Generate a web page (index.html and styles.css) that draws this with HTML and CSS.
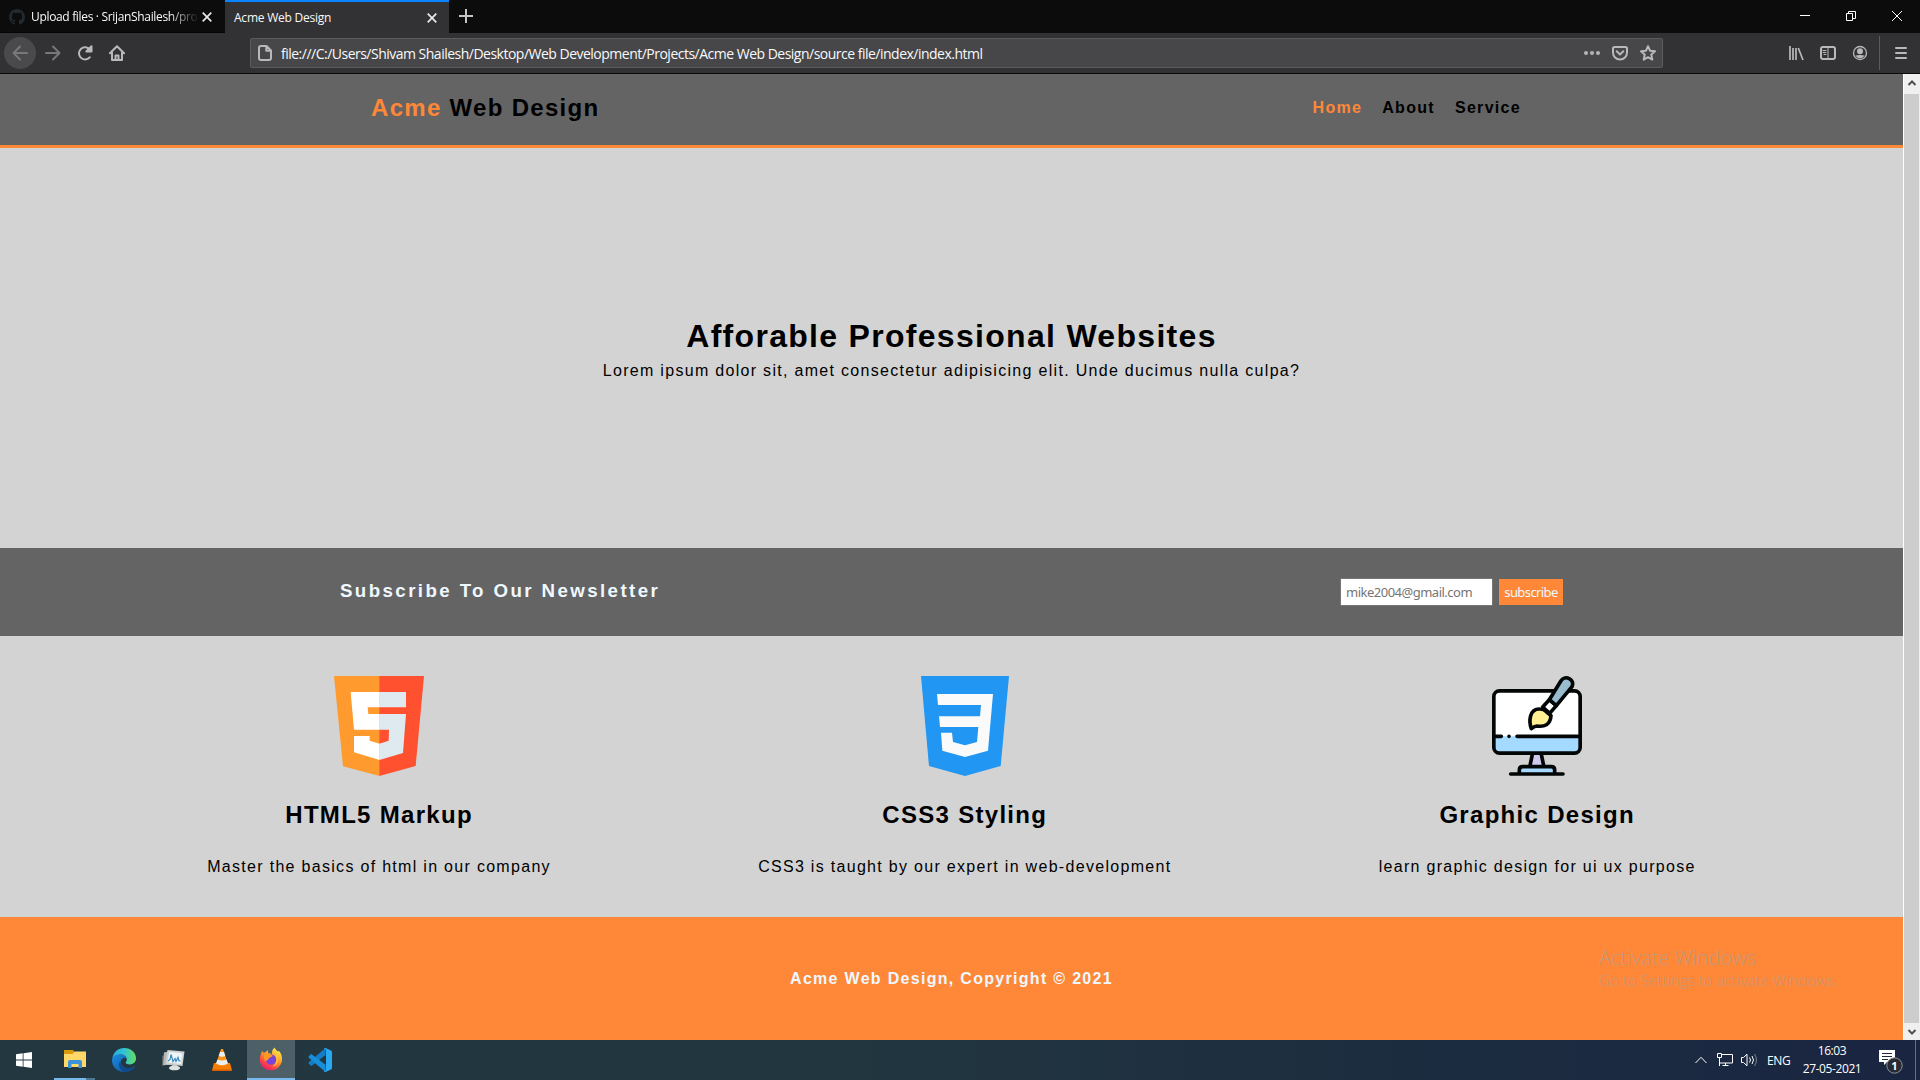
FILE: index.html
```html
<!DOCTYPE html>
<html lang="en">
<head>
<meta charset="utf-8">
<title>Acme Web Design</title>
<link rel="stylesheet" href="styles.css">
</head>
<body>
<div class="browser">
  <div class="tabs">
    <div class="tab tab-idle">
      <svg class="github" viewBox="0 0 16 16" width="16" height="16"><path fill="#24292e" d="M8 0C3.58 0 0 3.58 0 8c0 3.54 2.29 6.53 5.47 7.59.4.07.55-.17.55-.38 0-.19-.01-.82-.01-1.49-2.01.37-2.53-.49-2.69-.94-.09-.23-.48-.94-.82-1.13-.28-.15-.68-.52-.01-.53.63-.01 1.08.58 1.23.82.72 1.21 1.87.87 2.33.66.07-.52.28-.87.51-1.07-1.78-.2-3.64-.89-3.64-3.95 0-.87.31-1.59.82-2.15-.08-.2-.36-1.02.08-2.12 0 0 .67-.21 2.2.82a7.6 7.6 0 0 1 4 0c1.53-1.04 2.2-.82 2.2-.82.44 1.1.16 1.92.08 2.12.51.56.82 1.27.82 2.15 0 3.07-1.87 3.75-3.65 3.95.29.25.54.73.54 1.48 0 1.07-.01 1.93-.01 2.2 0 .21.15.46.55.38A8 8 0 0 0 16 8c0-4.42-3.58-8-8-8z"/></svg>
      <span class="tab-title idle-title">Upload files · SrijanShailesh/pro</span>
      <svg class="tab-close" viewBox="0 0 10 10" width="10" height="10"><path d="M.7.7l8.6 8.6M9.3.7L.7 9.3"/></svg>
    </div>
    <div class="tab tab-active">
      <span class="tab-title active-title">Acme Web Design</span>
      <svg class="tab-close" viewBox="0 0 10 10" width="10" height="10"><path d="M.7.7l8.6 8.6M9.3.7L.7 9.3"/></svg>
    </div>
    <svg class="tab-add" viewBox="0 0 14 14" width="14" height="14"><path d="M7 0v14M0 7h14"/></svg>
    <div class="window-buttons">
      <svg viewBox="0 0 10 10" width="10" height="10"><path d="M0 4.5h10"/></svg>
      <svg viewBox="0 0 10 10" width="10" height="10"><path d="M.5 2.5h6v7h-6zM2.5 2.5v-2h7v7h-3"/></svg>
      <svg viewBox="0 0 10 10" width="10" height="10"><path d="M0 0l10 10M10 0L0 10"/></svg>
    </div>
  </div>
  <div class="toolbar">
    <div class="nav-buttons">
      <span class="back"><svg class="line dim" viewBox="0 0 16 16" width="16" height="16"><path d="M15 8H1.5M8 1.5L1.5 8 8 14.5"/></svg></span>
      <svg class="line dim" viewBox="0 0 16 16" width="16" height="16"><path d="M1 8h13.5M8 1.5L14.500 8 8 14.5"/></svg>
      <svg class="line" viewBox="0 0 16 16" width="16" height="16"><path d="M12.700 12.300A6.100 6.100 0 1 1 13 4.700M14.500 1.300V6.500H9.300z"/></svg>
      <svg class="line" viewBox="0 0 16 16" width="16" height="16"><path d="M.9 8.300L8 1.300l7.100 7M3 7.500V15h10V7.500"/><path d="M6.500 15v-4.500h3V15"/></svg>
    </div>
    <div class="url">
      <svg class="line" viewBox="0 0 16 16" width="16" height="16"><path d="M4 1h5.500L14 5.500V13a2 2 0 0 1-2 2H4a2 2 0 0 1-2-2V3a2 2 0 0 1 2-2zM9.300 1v4.700H14"/></svg>
      <span class="url-text">file:///C:/Users/Shivam Shailesh/Desktop/Web Development/Projects/Acme Web Design/source file/index/index.html</span>
      <div class="url-actions">
        <svg viewBox="0 0 16 16" width="16" height="16" fill="#b5b5b6"><circle cx="2" cy="8" r="2"/><circle cx="8" cy="8" r="2"/><circle cx="14" cy="8" r="2"/></svg>
        <svg class="line" viewBox="0 0 16 16" width="16" height="16"><path d="M2.500 2h11a1.500 1.500 0 0 1 1.500 1.500V7.500a7 7 0 0 1-14 0V3.500A1.500 1.500 0 0 1 2.500 2zM4.700 6.300L8 9.500l3.300-3.200"/></svg>
        <svg class="line" viewBox="0 0 16 16" width="16" height="16"><path d="M8 1.200l2 4.500 5 .6-3.700 3.300 1 5L8 12.200l-4.300 2.400 1-5L1 6.300l5-.6z"/></svg>
      </div>
    </div>
    <div class="tools">
      <svg class="line books" viewBox="0 0 16 16" width="16" height="16"><path d="M2 1v14M5 3v12M8 3v12M10.300 3l4.700 12"/></svg>
      <svg class="line" viewBox="0 0 16 16" width="16" height="16"><rect x="1" y="2" width="14" height="12" rx="2"/><path class="thin" d="M8 2v12M3 5.500h3M3 7.500h3M4 9.500h2"/></svg>
      <svg class="line" viewBox="0 0 16 16" width="16" height="16"><circle cx="8" cy="8" r="6.500" stroke-width="1.300"/><circle class="solid" cx="8" cy="6.200" r="3"/><path class="solid" d="M3.500 10.300c2 .4 2.500-.3 4.500-.3s2.500.7 4.500.3c-.7 1.800-2.500 3-4.500 3s-3.800-1.200-4.500-3z"/></svg>
      <span class="separator"></span>
      <svg class="line" viewBox="0 0 16 16" width="16" height="16"><path d="M3 3h10M3 8h10M3 13h10"/></svg>
    </div>
  </div>
  <div class="viewport">
    <div class="page">
      <header class="header">
        <h1 class="logo"><span class="accent">Acme</span> Web Design</h1>
        <nav class="menu"><a class="accent">Home</a><a>About</a><a>Service</a></nav>
      </header>
      <section class="hero">
        <h1>Afforable Professional Websites</h1>
        <p>Lorem ipsum dolor sit, amet consectetur adipisicing elit. Unde ducimus nulla culpa?</p>
      </section>
      <section class="newsletter">
        <h3>Subscribe To Our Newsletter</h3>
        <form class="form">
          <input class="email" type="email" placeholder="mike2004@gmail.com">
          <button class="submit" type="button">subscribe</button>
        </form>
      </section>
      <section class="features">
        <article class="feature">
          <svg viewBox="462 48 270 300" width="90" height="100"><path fill="#ff9a2e" d="M462 48h137v300l-110-29z"/><path fill="#ff512f" d="M598 48h134l-25 270-109 30z"/><path fill="#fff" d="M512 96h87v46h-36l2 20h34v47h-77zM522 228h47v14l30 9v49l-77-23z"/><path fill="#deeaf0" d="M598 96h80v46h-80zM598 162h80l-9 117-71 21v-49l28-9 1-33h-29z"/></svg>
          <h2>HTML5 Markup</h2>
          <p>Master the basics of html in our company</p>
        </article>
        <article class="feature">
          <svg viewBox="540 48 270 300" width="90" height="100"><path fill="#2196f3" d="M543 48h264l-25 270-107 30-108-30z"/><path fill="#fafafa" d="M591 102h168l-15 170-69 19-68-19-4-54h33l3 28 36 10 36-10 4-45H600l-3-32h123l3-34H594z"/></svg>
          <h2>CSS3 Styling</h2>
          <p>CSS3 is taught by our expert in web-development</p>
        </article>
        <article class="feature">
          <svg viewBox="396 48 270 300" width="90" height="100"><rect x="402" y="93" width="258" height="186" rx="17" fill="#fff"/><path fill="#a4daff" d="M402 229h258v35q0 15-15 15H417q-15 0-15-15zM478 337v-7q0-10 10-10h86q10 0 10 10v7z"/><path fill="#cdc9ef" d="M518 281h26l7 38h-41z"/><g fill="none" stroke="#030606" stroke-width="11" stroke-linecap="round" stroke-linejoin="round"><rect x="401.500" y="92.500" width="259" height="187" rx="17"/><path d="M404 229h20M447 229h.1M471 229h187M517 283l-7 34M544 283l7 34M478 337v-7q0-10 10-10h86q10 0 10 10v7M452 342h157"/><path fill="#fff" d="M548 141l20-22 21 18-20 23z"/><path fill="#99bccf" d="M568 119l35-57c12-18 43-5 33 18l-47 57z"/><path fill="#fff094" d="M514 206c-8-22-6-61 26-59 9 0 14 3 20 9l13 11c-2 28-20 34-42 31-8 0-12 4-17 8z"/></g></svg>
          <h2>Graphic Design</h2>
          <p>learn graphic design for ui ux purpose</p>
        </article>
      </section>
      <footer class="footer">Acme Web Design, Copyright © 2021</footer>
      <div class="watermark"><div class="wm-title">Activate Windows</div><div class="wm-text">Go to Settings to activate Windows.</div></div>
    </div>
    <div class="scrollbar">
      <svg viewBox="0 0 16 20" width="16" height="20"><path d="M4.500 11L8 7.500l3.500 3.500"/></svg>
      <div class="thumb"></div>
      <svg viewBox="0 0 16 17" width="16" height="17"><path d="M4.500 7L8 10.500 11.500 7"/></svg>
    </div>
  </div>
</div>
<div class="taskbar">
  <div class="apps">
    <span class="app"><svg viewBox="0 0 16 16" width="16" height="16" fill="#fff"><path d="M0 2.300L6.700 1.300v6.300H0zM7.500 1.200L16 0v7.600H7.500zM0 8.400h6.700v6.300L0 13.700zM7.500 8.400H16V16l-8.500-1.200z"/></svg></span>
    <span class="app open"><svg viewBox="0 0 22 18" width="22" height="18"><path fill="#d99a0b" d="M0 0h9l1.500 2-1 2H0z"/><path fill="#ffd869" d="M0 4h8.500l2-2.500H22V17H0z"/><path fill="#3b93da" d="M4 18v-6q0-2 2-2h10q2 0 2 2v6h-3.500v-4h-7v4z"/></svg></span>
    <span class="app"><svg viewBox="0 0 24 24" width="24" height="24"><defs><linearGradient id="edgeTop" x1="0" y1=".5" x2="1" y2=".5"><stop offset="0" stop-color="#2aa7e4"/><stop offset=".5" stop-color="#32c3d3"/><stop offset="1" stop-color="#64e05b"/></linearGradient><linearGradient id="edgeLow" x1="0" y1="0" x2="1" y2="1"><stop offset="0" stop-color="#1b8de0"/><stop offset="1" stop-color="#0f4f9d"/></linearGradient></defs><path fill="url(#edgeTop)" d="M.3 10.500C1.300 4 6.200 0 12.200 0 19 0 24 4.800 24 10.300c0 4-3 6.200-6.200 6.200-2.800 0-4.200-.9-4.200-1.900 0-.8 1.200-1.300 1.200-3.200 0-2.400-2.300-5-6.100-5C5 6.400 1.800 8.200.3 10.500z"/><path fill="url(#edgeLow)" d="M0 12.500C0 8.600 3.700 6.400 8.500 6.400c3.700 0 6.200 2.200 6.300 4.700-1-1.200-2-1.500-3-1.300-3.500 1.500-3.700 5.800-1 8.500 2.800 2.700 6.800 2.800 11.200.2.500-.3.900.2.600.6C20.500 22.200 16.500 24 12.500 24 5 24 0 18.600 0 12.500z"/><path fill="#114a8b" d="M8.800 12c-1 3.500.7 6.700 4.500 7.700 3 .8 6 .1 8.700-1.200.5-.2.800.3.500.7C20 22.500 15.700 24.500 11.500 23.900 6.500 21.500 6 15 8.800 12z"/></svg></span>
    <span class="app"><svg viewBox="0 0 24 24" width="24" height="24"><path fill="#5a5f62" d="M1 8l4-2 1 11-5 1z"/><path fill="#b4b7b7" d="M3 4.500l6-1.500 2 14-9 0z"/><path fill="#d0d2d1" d="M6.500 2l17 1.500-2 14.500-17-2z"/><path fill="#eef6f8" d="M8.300 4l13 1.200L20 16 6.500 14.300z"/><path fill="none" stroke="#3589be" stroke-width="1.200" d="M7 13l2-1.500 1-5 2 7 2-3 1 3 2-4 1 3.500h1.500"/><path fill="#c3c6c6" d="M11 17h5l1 2h-7z"/><ellipse cx="13.500" cy="20" rx="5.500" ry="2.300" fill="#dfe1e0"/></svg></span>
    <span class="app"><svg viewBox="0 0 24 24" width="24" height="24"><path fill="#f57d00" d="M4 15h16l2 7.500H2z"/><path fill="#d75e00" d="M2 21.500h20V23H2z"/><path fill="#ff941d" d="M11 1h2l5 15q-6 4-12 0z"/><path fill="#e9eef1" d="M10 4h4l1.300 4q-3.300 1.500-6.600 0zM7.500 11.500q4.500 2 9 0l1.500 4q-6 3.500-12 0z"/></svg></span>
    <span class="app current"><svg viewBox="0 0 24 24" width="24" height="24"><defs><linearGradient id="fox" x1=".8" y1="0" x2=".2" y2="1"><stop offset="0" stop-color="#fff44f"/><stop offset=".45" stop-color="#ff9828"/><stop offset=".75" stop-color="#ff3f48"/><stop offset="1" stop-color="#e01778"/></linearGradient></defs><path fill="url(#fox)" d="M2 7l1-3 2 2q1-1 2-1.300L9 3v3l4 1q-.5-4 2.500-6.500 1 2.500 3.500 4l1-.5c4 4.500 4 11 .5 15A11 11 0 0 1 1 14.500C.5 12 1 9 2 7z"/><circle cx="12" cy="12.500" r="5.200" fill="#7942da"/><path fill="#ff9a1f" d="M5 9q2-3 6-2l3 2-4 2q-1 3-4.500 3z"/><path fill="#ffc42d" d="M15 6q5 3 4 8-1 5-6 6 8-5 2-14z"/></svg></span>
    <span class="app"><svg viewBox="0 0 24 24" width="24" height="24"><path fill="#137dc5" d="M17.500 0v7L3.500 18 1 16q-1-1 0-2z"/><path fill="#168ed8" d="M1 8q-1 1 0 2l16.500 14v-7.200L3.300 6z"/><path fill="#28a9f2" d="M17.500 0l5.500 2.500q1 .5 1 1.500v16q0 1-1 1.500L17.500 24q-1 .2-1.500-.7 2 0 2-2V2.700q0-2-2-2 .5-.9 1.500-.7z"/></svg></span>
  </div>
  <div class="tray">
    <svg class="white" viewBox="0 0 12 8" width="12" height="8"><path d="M.5 7L6 1.300 11.500 7"/></svg>
    <svg class="white network" viewBox="0 0 16 14" width="16" height="14"><path d="M5 1.500h10.500v8.500H3M8.500 10v3M5.500 12.500h6M.5.500h4v4h-4zM2.500 4.500V13"/></svg>
    <svg class="white speaker" viewBox="0 0 17 14" width="17" height="14"><path d="M.5 4.500h2l3.500-3.300v11.600L2.500 9.500h-2zM8.500 4.500q2 2.500 0 5M11 3q3 4 0 8"/><path stroke="#788291" d="M13.500 1q4 6 0 12"/></svg>
    <span class="lang">ENG</span>
    <div class="clock"><span class="time">16:03</span><span class="date">27-05-2021</span></div>
    <svg class="notice" viewBox="0 0 25 25" width="25" height="25"><path fill="#fff" d="M0 1h16v12H8l-3 3v-3H0z"/><path stroke="#1b2841" d="M3 4.500h10M3 7.500h10M3 10.500h6"/><circle cx="15.500" cy="16.500" r="7.700" fill="#272b33" stroke="#8f9296"/><text x="15.500" y="20.600" class="count">1</text></svg>
    <span class="peek"></span>
  </div>
</div>
</body>
</html>
```
FILE: styles.css
```css
* { box-sizing: border-box; margin: 0; padding: 0; }
body { width: 1920px; height: 1080px; overflow: hidden; display: flex; flex-direction: column; font-family: "Liberation Sans", Arial, sans-serif; font-size: 16px; }
svg { display: block; flex: none; }
.browser { flex: 1; min-height: 0; display: flex; flex-direction: column; }

.tabs { height: 33px; background: #0c0c0d; display: flex; font-family: "Open Sans", sans-serif; color: #f9f9fa; }
.tab { height: 33px; display: flex; align-items: center; }
.tab-idle { width: 225px; padding: 1px 13px 0 9px; border-bottom: 1px solid #050505; }
.tab-active { width: 224px; padding: 0 12px 0 9px; background: #323234; border-top: 2px solid #0a84ff; justify-content: space-between; }
.tab-title { font-size: 12px; letter-spacing: -0.35px; white-space: nowrap; }
.active-title { letter-spacing: -0.23px; }
.idle-title { width: 168px; margin: 0 3px 0 6px; letter-spacing: -0.33px; -webkit-mask-image: linear-gradient(90deg, #000 82%, transparent); mask-image: linear-gradient(90deg, #000 82%, transparent); }
.tab-close path { stroke: #e8e8e9; stroke-width: 1.700; fill: none; }
.tab-add { margin: 9px 0 0 10px; }
.tab-add path { stroke: #c5c5c6; stroke-width: 2; }
.window-buttons { margin: 11px 18px 0 auto; display: flex; gap: 36px; }
.window-buttons path { stroke: #fff; fill: none; }

.toolbar { height: 41px; background: #323234; border-bottom: 1px solid #0c0c0d; display: flex; align-items: center; padding-left: 4px; }
.line { fill: none; stroke: #b9b9ba; stroke-width: 2; stroke-linejoin: round; stroke-linecap: round; }
.line.dim { stroke: #78787a; }
.line .thin { stroke-width: 1; }
.line .solid { fill: #b9b9ba; stroke: none; }
.line.books { stroke-width: 1.700; stroke-linecap: butt; }
.nav-buttons { width: 246px; display: flex; align-items: center; gap: 16px; }
.back { width: 32px; height: 32px; margin-right: -7px; border-radius: 50%; background: #4a4a4c; display: flex; align-items: center; justify-content: center; }
.url { width: 1413px; height: 30px; border: 1px solid #5b5b5d; border-radius: 2px; background: #474749; display: flex; align-items: center; padding: 0 6px; }
.url-text { margin-left: 8px; font: 14px "Open Sans", sans-serif; letter-spacing: -0.507px; color: #f9f9fa; white-space: nowrap; }
.url-actions { margin-left: auto; display: flex; gap: 12px; }
.tools { margin-left: auto; padding-right: 11px; display: flex; align-items: center; gap: 16px; }
.separator { width: 1px; height: 34px; margin: 0 -3px 0 -5px; background: #5b5b5d; }

.viewport { flex: 1; min-height: 0; display: flex; }
.page { width: 1903px; position: relative; background: #d3d3d3; display: flex; flex-direction: column; letter-spacing: 1.3px; color: #000; }
.accent { color: #ff8838; }
.header { height: 74px; padding: 0 372px 4px 371px; border-bottom: 3px solid #ff8838; background: #646464; display: flex; align-items: center; justify-content: space-between; }
.logo { font-size: 24px; }
.menu { display: flex; font-weight: bold; }
.menu a { padding: 0 10px; }
.hero { height: 400px; padding-top: 1px; display: flex; flex-direction: column; align-items: center; justify-content: center; gap: 7px; }
.hero h1 { font-size: 32px; }
.newsletter { height: 88px; padding: 0 340px; background: #646464; color: #f0f8ff; display: flex; align-items: center; justify-content: space-between; }
.newsletter h3 { margin-bottom: 2px; font-size: 18.720px; letter-spacing: 2.4px; }
.form { display: flex; align-items: center; gap: 6px; }
.email { width: 153px; height: 28px; border: 1px solid #767676; padding: 0 5px; font: 13px "Noto Sans", sans-serif; letter-spacing: -0.5px; background: #fff; }
.email::placeholder { color: #757575; }
.submit { width: 64px; height: 26px; border: 0; background: #ff8838; color: #f0f8ff; font: 13px "Noto Sans", sans-serif; letter-spacing: -0.6px; }
.features { height: 281px; padding-top: 40px; display: flex; justify-content: space-evenly; }
.feature { display: flex; flex-direction: column; align-items: center; }
.feature h2 { font-size: 24px; margin: 25px 0 29px; }
.footer { flex: 1; background: #ff8838; color: #f0f8ff; display: flex; align-items: center; justify-content: center; font-weight: bold; }
.watermark { position: absolute; left: 1599px; top: 870px; color: #c2977c; font-family: "Open Sans", sans-serif; font-weight: 300; letter-spacing: 0; white-space: nowrap; }
.wm-title { font-size: 20px; line-height: 27px; }
.wm-text { font-size: 15px; line-height: 18px; letter-spacing: 0.06px; }
.scrollbar { width: 17px; background: #f0f0f0; border-left: 1px solid #fff; display: flex; flex-direction: column; }
.scrollbar path { fill: none; stroke: #505050; stroke-width: 2; }
.thumb { flex: 1; margin-right: 1px; background: #cdcdcd; }

.taskbar { height: 40px; background: linear-gradient(90deg, #22373f 0%, #21363f 45%, #1c2c40 75%, #1a2541 100%); display: flex; justify-content: space-between; font-family: "Open Sans", sans-serif; font-size: 12px; color: #fff; }
.apps { display: flex; gap: 1px; }
.app { width: 48px; height: 40px; display: flex; align-items: center; justify-content: center; }
.app.open { margin: 0 4px 0 5px; width: 41px; border-bottom: 2px solid #76b9ed; border-image: linear-gradient(90deg, #76b9ed 76%, #4d7996 76%) 1; border-width: 0 0 2px; }
.app.current { background: #4d6068; border-bottom: 2px solid #76b9ed; }
.tray { display: flex; align-items: center; }
.white path { fill: none; stroke: #fff; }
.white path[stroke] { stroke: #788291; }
.network { margin-left: 10px; }
.speaker { margin-left: 8px; }
.lang { margin-left: 9px; width: 25px; letter-spacing: -0.4px; }
.clock { width: 60px; margin-left: 10px; display: flex; flex-direction: column; align-items: center; line-height: 18px; letter-spacing: -0.4px; }
.notice { margin: 2px 0 0 17px; }
.count { fill: #fff; font: bold 11px "Open Sans", sans-serif; text-anchor: middle; }
.peek { align-self: stretch; width: 5px; margin-left: 11px; border-left: 1px solid #62708a; }
```
